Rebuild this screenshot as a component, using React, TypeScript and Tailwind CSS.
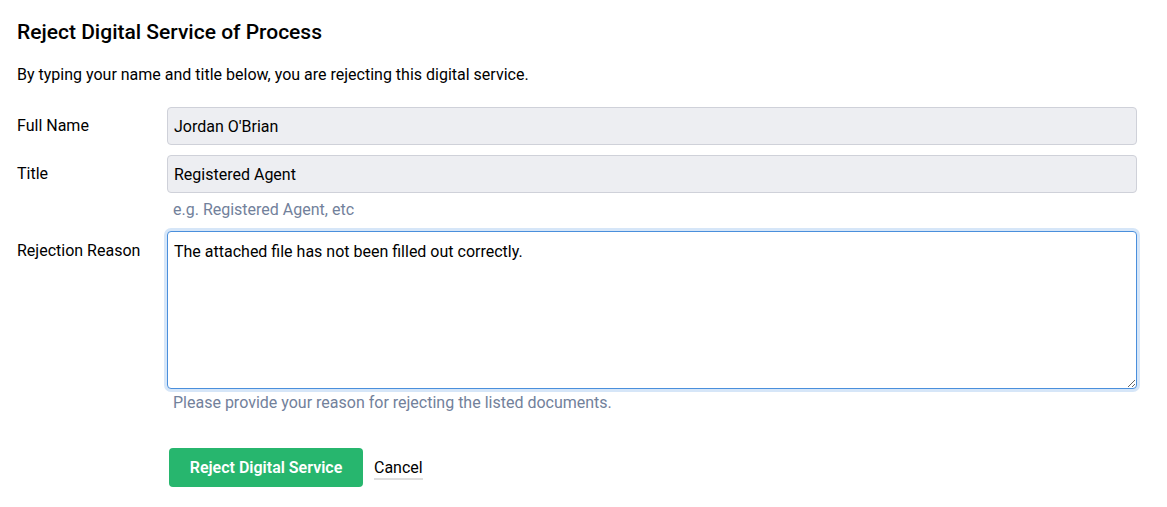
export default function App() {
  return (
    <div className="min-h-screen bg-white px-[17px] pt-[20px] font-['Roboto','Liberation_Sans',sans-serif] text-black">
      <h2 className="text-[21px] leading-[24px] font-medium">Reject Digital Service of Process</h2>
      <p className="mt-[21px] text-[16px] leading-[20px]">
        By typing your name and title below, you are rejecting this digital service.
      </p>

      <div className="mt-[22px] flex flex-col w-[1120px]">
        <div className="flex items-start">
          <label className="w-[150px] shrink-0 pt-[9px] text-[16px] leading-[20px]">Full Name</label>
          <input
            readOnly
            value="Jordan O'Brian"
            className="flex-1 h-[38px] rounded-[4px] border border-[#cfd1d9] bg-[#edeef2] px-[6px] pt-[1px] text-[16px] outline-none"
          />
        </div>

        <div className="mt-[10px] flex items-start">
          <label className="w-[150px] shrink-0 pt-[9px] text-[16px] leading-[20px]">Title</label>
          <div className="flex-1 flex flex-col">
            <input
              readOnly
              value="Registered Agent"
              className="h-[38px] rounded-[4px] border border-[#cfd1d9] bg-[#edeef2] px-[6px] pt-[1px] text-[16px] outline-none"
            />
            <span className="mt-[7px] pl-[6px] text-[16px] leading-[20px] text-[#72819b]">e.g. Registered Agent, etc</span>
          </div>
        </div>

        <div className="mt-[11px] flex items-start">
          <label className="w-[150px] shrink-0 pt-[10px] text-[16px] leading-[20px]">Rejection Reason</label>
          <div className="flex-1 flex flex-col">
            <textarea
              defaultValue="The attached file has not been filled out correctly. "
              className="h-[158px] resize-y rounded-[4px] border border-[#4a8fdc] bg-white px-[6px] pt-[10px] pb-[8px] text-[16px] leading-[20px] outline-none shadow-[0_0_0_3px_#d6e6f8]"
            />
            <span className="mt-[4px] pl-[6px] text-[16px] leading-[20px] text-[#72819b]">
              Please provide your reason for rejecting the listed documents.
            </span>
          </div>
        </div>

        <div className="mt-[35px] flex items-center pl-[152px] gap-[11px]">
          <button className="h-[39px] w-[194px] rounded-[4px] bg-[#27b66e] text-[16px] font-semibold text-white">
            Reject Digital Service
          </button>
          <button className="mt-[2px] border-b-2 border-[#dedede] text-[16px] leading-[20px] text-black">Cancel</button>
        </div>
      </div>
    </div>
  );
}
